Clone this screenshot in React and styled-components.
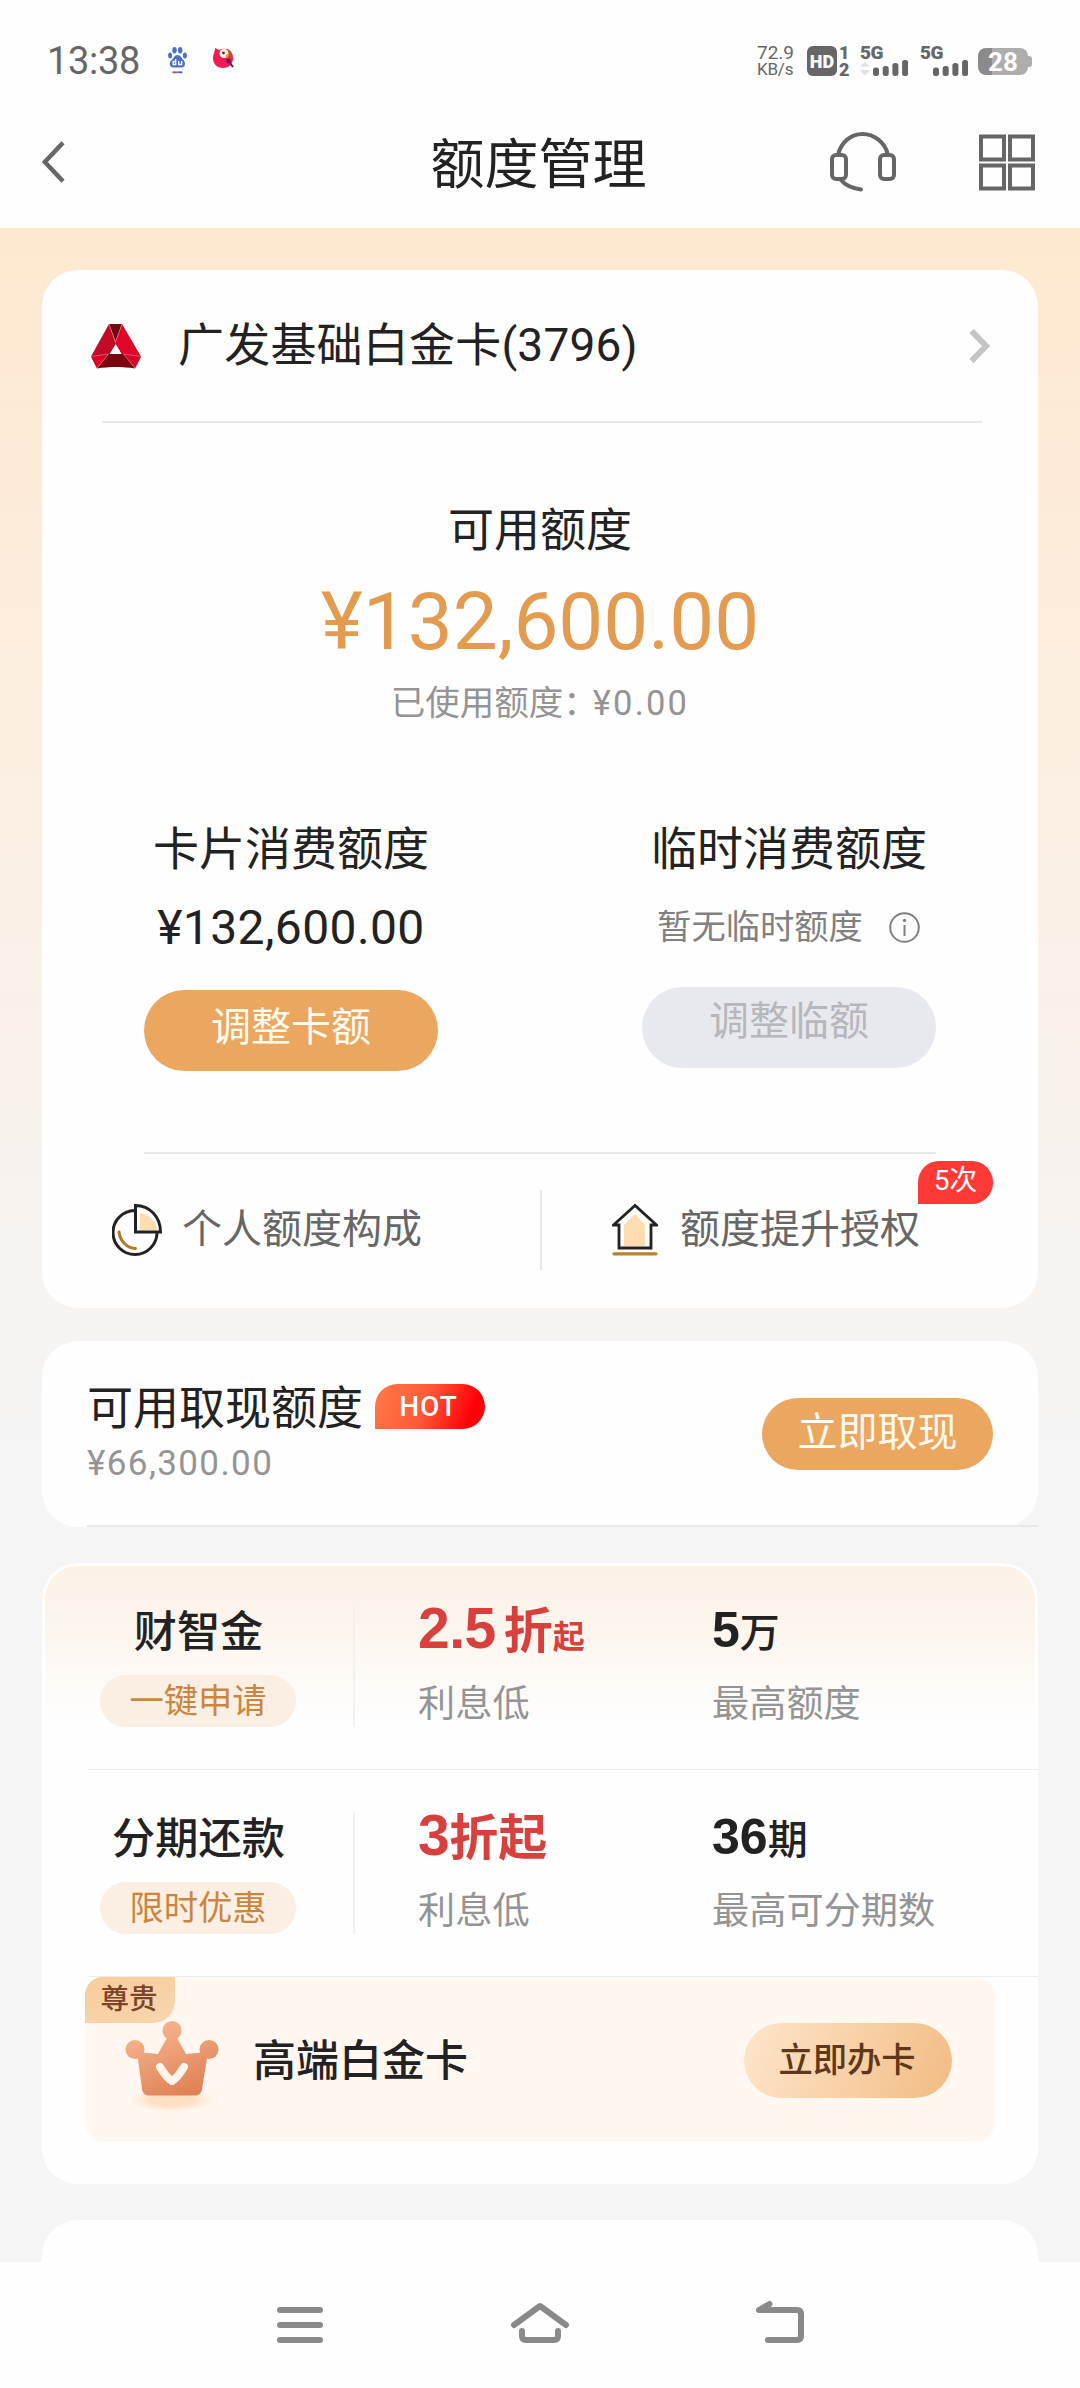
import React from 'react';
import styled, { createGlobalStyle, css } from 'styled-components';

const GlobalStyle = createGlobalStyle`
    * {
        box-sizing: border-box;
    }

    body {
        margin: 0;
        background: #f5f5f5;
        color: #222;
        font-family: Roboto, 'Noto Sans CJK SC', sans-serif;
    }

    svg {
        display: block;
        flex: none;
    }
`;

const Page = styled.div`
    display: flex;
    flex-direction: column;
    width: 1080px;
    height: 2388px;
    overflow: hidden;
`;

/* status bar */

const StatusBar = styled.div`
    display: flex;
    align-items: center;
    flex: none;
    height: 98px;
    padding: 24px 52px 0 47px;
    background: #fefefe;
    color: #666;
`;

const Clock = styled.span`
    width: 121px;
    font-size: 38px;
    line-height: 40px;
    letter-spacing: -0.3px;
`;

const AppIcons = styled.div`
    display: flex;
    flex: 1;
    gap: 26px;
`;

const Speed = styled.div`
    width: 50px;
    font-size: 19px;
    line-height: 17px;
    text-align: left;

    small {
        display: block;
        font-size: 17px;
        letter-spacing: -0.2px;
    }
`;

const HdBadge = styled.span`
    width: 30px;
    height: 30px;
    border-radius: 6px;
    background: #666;
    color: #fff;
    font-size: 18px;
    font-weight: 900;
    line-height: 31px;
    text-align: center;
`;

const SimNumbers = styled.div`
    width: 23px;
    padding-left: 2px;
    font-size: 18px;
    font-weight: 900;
    line-height: 17px;

    span {
        display: block;
        text-align: left;
    }
`;

const Signal = styled.div`
    position: relative;
    width: 48px;
    height: 30px;
    margin-right: ${props => props.$gap}px;

    span {
        position: absolute;
        top: -2px;
        left: 0;
        font-size: 19px;
        font-weight: 900;
        line-height: 18px;
        letter-spacing: -0.5px;
    }
`;

const Battery = styled.div`
    position: relative;
    width: 50px;
    height: 27px;
    border-radius: 8px;
    background: linear-gradient(90deg, #8a8a8a 14px, #adadad 14px);
    color: #fff;
    font-size: 26px;
    font-weight: 700;
    line-height: 28px;
    text-align: center;

    &::after {
        content: '';
        position: absolute;
        top: 8px;
        right: -4px;
        width: 4px;
        height: 11px;
        border-radius: 0 3px 3px 0;
        background: #adadad;
    }
`;

/* header */

const Header = styled.header`
    display: grid;
    grid-template-columns: 1fr auto 1fr;
    align-items: center;
    flex: none;
    height: 130px;
    padding: 0 45px 2px 42px;
    background: #fefefe;
`;

const Title = styled.h1`
    margin: 0;
    padding-top: 8px;
    font-size: 54px;
    font-weight: 400;
    line-height: 72px;
`;

const HeaderActions = styled.div`
    display: flex;
    align-items: center;
    justify-content: flex-end;
    gap: 83px;
`;

/* content */

const Content = styled.main`
    display: flex;
    flex: 1;
    flex-direction: column;
    min-height: 0;
    padding: 42px 42px 0;
    overflow: hidden;
    background: linear-gradient(#fee8cf, #fceee0 480px, #f7f3f0 1000px, #f5f5f5 1240px);
`;

const Card = styled.section`
    position: relative;
    flex: none;
    border-radius: 36px;
    background: #fefefe;
`;

const LimitCard = styled(Card)`
    height: 1038px;
`;

const CardPicker = styled.div`
    display: flex;
    align-items: center;
    height: 151px;
    padding: 1px 47px 0 49px;
    font-size: 46px;

    span {
        flex: 1;
        margin: -2px 0 0 37px;
        line-height: 60px;
        letter-spacing: 0.2px;
    }
`;

const Divider = styled.div`
    height: 2px;
    margin: ${props => props.$margin};
    background: #e7e7e8;
`;

const Summary = styled.div`
    padding-top: 77px;
    text-align: center;
`;

const Label = styled.div`
    font-size: 46px;
    line-height: 60px;
`;

const Total = styled.div`
    margin-top: 17px;
    color: #e39b50;
    font-size: 80px;
    line-height: 90px;
`;

const Used = styled.div`
    margin-top: 11px;
    color: #949494;
    font-size: 34.5px;
    line-height: 50px;

    span {
        margin-left: -5px;
        letter-spacing: 2.2px;
    }
`;

const Limits = styled.div`
    display: grid;
    grid-template-columns: 1fr 1fr;
    height: 252px;
    margin-top: 91px;
`;

const Limit = styled.div`
    display: flex;
    align-items: center;
    flex-direction: column;
`;

const LimitAmount = styled.div`
    margin: 19px 0 32px;
    font-size: 48px;
    line-height: 60px;
    letter-spacing: 0.4px;
`;

const LimitStatus = styled.div`
    display: flex;
    align-items: center;
    gap: 26px;
    margin: 18px 0 30px;
    padding-right: 1px;
    color: #808080;
    font-size: 34.3px;
    line-height: 60px;
`;

const Button = styled.button`
    width: 294px;
    height: 81px;
    padding: 0 0 5px;
    border: 0;
    border-radius: 41px;
    background: #eba65f;
    color: #fffaf0;
    font-family: inherit;
    font-size: 40px;
    line-height: 60px;

    ${props =>
        props.disabled &&
        css`
            padding-bottom: 11px;
            background: #e8e9ee;
            color: #b7b7bb;
        `}
`;

const Links = styled.div`
    display: grid;
    grid-template-columns: 498px 1fr;
    align-items: center;
    height: 151px;
`;

const Link = styled.div`
    position: relative;
    display: flex;
    align-items: center;
    height: 80px;
    gap: ${props => props.$gap}px;
    padding-left: 70px;
    color: #666;
    font-size: 40px;
    line-height: 60px;

    & + & {
        border-left: 2px solid #e7e7e8;
    }
`;

const CountBadge = styled.span`
    position: absolute;
    top: -29px;
    right: 45px;
    width: 75px;
    height: 43px;
    border-radius: 21px 21px 21px 0;
    background: #fe3a36;
    color: #fff;
    font-size: 28px;
    line-height: 39px;
    text-align: center;
`;

const CashCard = styled(Card)`
    display: flex;
    align-items: center;
    justify-content: space-between;
    height: 186px;
    margin-top: 33px;
    padding: 0 45px;

    &::after {
        content: '';
        position: absolute;
        right: 0;
        bottom: 0;
        left: 45px;
        height: 2px;
        background: #e9e9ea;
    }
`;

const CashTitle = styled.div`
    display: flex;
    align-items: center;
    gap: 12px;
    margin-top: -4px;
    font-size: 46px;
    line-height: 56px;
`;

const HotBadge = styled.span`
    width: 110px;
    height: 45px;
    margin-top: -3px;
    border-radius: 23px 23px 23px 0;
    background: linear-gradient(110deg, #ff7a48, #ff5a38 45%, #ff0008 85%);
    color: #fff;
    font-size: 28px;
    font-weight: 500;
    line-height: 46px;
    text-align: center;
    text-indent: -3px;
    letter-spacing: 1px;
`;

const CashAmount = styled.div`
    margin-top: 8px;
    color: #949494;
    font-size: 35px;
    line-height: 40px;
    letter-spacing: 1.4px;
`;

const CashButton = styled(Button)`
    width: 231px;
    height: 72px;
    padding-bottom: 3px;
`;

/* offers */

const OfferCard = styled(Card)`
    height: 621px;
    margin-top: 36px;
    background: linear-gradient(#fbf1e6, #fcf5ed 60px, #fefefe 160px);
    box-shadow: inset 0 0 0 3px #fefefe;
`;

const Offer = styled.div`
    display: grid;
    grid-template-columns: 222px 46px 63px 294px 1fr;
    height: 207px;
    margin-left: 45px;
    padding-top: 42px;
    border-bottom: 1px solid #ededee;

    &::before {
        content: '';
        grid-column: 2;
        grid-row: 1;
        justify-self: end;
        width: 2px;
        height: 122px;
        background: #f3f1f0;
    }
`;

const OfferCell = styled.div`
    grid-column: ${props => props.$column};
    grid-row: 1;
`;

const OfferName = styled.div`
    padding-left: 1px;
    font-size: 43.2px;
    font-weight: 500;
    line-height: 56px;
    text-align: center;
`;

const Tag = styled.div`
    width: 196px;
    height: 52px;
    margin: 14px auto 0;
    border-radius: 26px;
    background: #fbeee3;
    color: #ca8640;
    font-size: 34.3px;
    line-height: 53px;
    text-align: center;
`;

const Rate = styled.div`
    height: 56px;
    color: #d7403c;
    font-family: 'Liberation Sans', 'Noto Sans CJK SC', sans-serif;
    font-size: 49px;
    font-weight: 700;
    line-height: 52px;

    b {
        margin-right: ${props => props.$gap || 0}px;
        font-size: 57px;
        line-height: 1px;
        letter-spacing: -0.5px;
    }

    small {
        font-size: 32px;
    }
`;

const Cap = styled.div`
    height: 56px;
    font-family: 'Liberation Sans', 'Noto Sans CJK SC', sans-serif;
    font-size: 40px;
    font-weight: 500;
    line-height: 57px;

    b {
        font-size: 50px;
        line-height: 1px;
    }
`;

const Hint = styled.div`
    margin-top: 18px;
    color: #949494;
    font-size: 37.2px;
    line-height: 50px;
`;

const Banner = styled.div`
    position: relative;
    display: flex;
    align-items: center;
    height: 165px;
    margin: 0 43px;
    padding: 0 43px 0 38px;
    border-radius: 20px;
    background: #fff7f0;
`;

const BannerTag = styled.span`
    position: absolute;
    top: 0;
    left: 0;
    width: 90px;
    height: 46px;
    padding-right: 2px;
    border-radius: 18px 0 22px 0;
    background: linear-gradient(160deg, #f7cd9b, #f8d5ae);
    color: #7b4429;
    font-size: 28.5px;
    font-weight: 500;
    line-height: 45px;
    text-align: center;
`;

const BannerTitle = styled.div`
    flex: 1;
    margin-left: 30px;
    padding-top: 3px;
    font-size: 43px;
    font-weight: 500;
    line-height: 60px;
`;

const BannerButton = styled(Button)`
    width: 208px;
    height: 75px;
    margin-top: 1px;
    padding: 0 2px 0 0;
    background: linear-gradient(110deg, #fee5cb, #f8cfa4 55%, #f1bb83);
    color: #5f381b;
    font-size: 34.3px;
    font-weight: 500;
`;

const NextCard = styled(Card)`
    height: 60px;
    margin-top: 36px;
    border-radius: 36px 36px 0 0;
`;

const NavBar = styled.nav`
    display: grid;
    grid-template-columns: repeat(3, 240px);
    align-items: center;
    justify-content: center;
    justify-items: center;
    flex: none;
    height: 126px;
    background: #fefefe;
`;

/* icons */

const PawIcon = () => (
    <svg width="19" height="28" viewBox="0 0 19 28" fill="#4a70c8">
        <ellipse cx="6.5" cy="3.3" rx="2.2" ry="3.2" />
        <ellipse cx="12.2" cy="3.3" rx="2.2" ry="3.2" />
        <ellipse cx="2.1" cy="8.4" rx="2" ry="3" />
        <ellipse cx="16.9" cy="8.4" rx="2" ry="3" />
        <path d="M9.5 8c3 0 4 3 6 5s2.4 7-1.5 7.500h-9C1 20 1 15 3.500 13s3-5 6-5Z" />
        <path
            d="M7.700 12v5.500H5.200v-3h2.500M10.700 14v3.500h3V14"
            fill="none"
            stroke="#fff"
            strokeWidth="1.300"
        />
        <path d="M4.500 25.300h5" stroke="#b84a70" strokeWidth="1.800" />
        <path d="M9.500 25.300h5" stroke="#5a5ac8" strokeWidth="1.800" />
    </svg>
);

const BirdIcon = () => (
    <svg width="22" height="28" viewBox="0 0 22 28">
        <path d="M2 1l4 2c6-3 14 0 14 8 0 6-4 10-10 10S0 17 0 11c0-4 2-6 2-10Z" fill="#ee1c55" />
        <path d="M14 2c5 2 6 6 5 10l-4-2Z" fill="#c84a2c" />
        <circle cx="11" cy="6.500" r="4.500" fill="#fff4e8" />
        <circle cx="10.500" cy="6" r="1.400" fill="#7a2030" />
        <path d="M12 9l4-3-1 5Z" fill="#d9a040" />
        <circle cx="15.500" cy="14" r="2.300" fill="#7a1050" />
        <path d="M17 16l3 4" stroke="#5a1040" strokeWidth="2" />
    </svg>
);

const SignalBars = ({ arrows, offset }) => (
    <svg width="48" height="30" viewBox="0 0 48 30" fill="#666">
        {arrows && <path d="M0 20.500L5 16l5 4.500ZM0 24h10l-5 5.500Z" fill="#e0e0e0" />}
        {[8.5, 10, 13, 16].map((height, i) => (
            <rect
                key={height}
                x={offset + i * 9.7}
                y={30 - height}
                width="6"
                height={height}
                rx="2.500"
            />
        ))}
    </svg>
);

const BackIcon = () => (
    <svg width="24" height="42" viewBox="0 0 24 42" fill="none" stroke="#666" strokeWidth="4.500">
        <path d="M21 1.800L2.800 21 21 40.200" />
    </svg>
);

const HeadsetIcon = () => (
    <svg width="66" height="60" viewBox="0 0 66 60" fill="none" stroke="#666" strokeWidth="4">
        <path d="M8 23C11 10 21 2 32.500 2S55 10 58 23" />
        <rect x="2" y="23" width="14" height="24" rx="4" />
        <rect x="50" y="23" width="14" height="24" rx="4" />
        <path d="M11 48c4 5 10 8 20 9.500" strokeLinecap="round" />
    </svg>
);

const GridIcon = () => (
    <svg width="56" height="57" viewBox="0 0 56 57" fill="none" stroke="#666" strokeWidth="4">
        <path d="M2 2.500h23v23H2ZM31 2.500h23v23H31ZM2 31.500h23v23H2ZM31 31.500h23v23H31Z" />
    </svg>
);

const BankLogo = () => (
    <svg width="50" height="45" viewBox="0 0 50 45">
        <path d="M18 0L0 32.500 6 44l13-14.500 6-9.500Z" fill="#c30a26" />
        <path d="M31 0l19 32.500L44 44 30 29.500l-6-10Z" fill="#e0062a" />
        <path d="M18 0h13l-6.500 18Z" fill="#6d0710" />
        <path d="M17.500 30h15L44 44.500c-12-2-26-2-38 0Z" fill="#7a0710" />
        <path d="M0 32.500L17.500 30 6 44.500ZM50 32.500L32.500 30 44 44.500Z" fill="#d8042a" />
        <path d="M24.700 20l5.800 10H19Z" fill="#fff" />
        <path
            d="M18 0l6.500 18L31 0M0 32.500L17.500 30 6 44M50 32.500L32.500 30 44 44"
            fill="none"
            stroke="#f4a0a8"
            strokeWidth="0.500"
        />
    </svg>
);

const ChevronIcon = () => (
    <svg width="22" height="34" viewBox="0 0 22 34" fill="none" stroke="#c4c4c6" strokeWidth="6">
        <path d="M2.500 2l14.500 15L2.500 32" />
    </svg>
);

const InfoIcon = () => (
    <svg width="31" height="31" viewBox="0 0 31 31" fill="none" stroke="#808080" strokeWidth="2">
        <circle cx="15.500" cy="15.500" r="14.300" />
        <path d="M15.500 13v11" />
        <circle cx="15.500" cy="8.500" r="1.700" fill="#808080" stroke="none" />
    </svg>
);

const PieIcon = () => (
    <svg width="51" height="52" viewBox="0 0 51 52" fill="none" strokeWidth="3">
        <path d="M22.500 6.500A22 22 0 1 0 45 28.500" stroke="#222" />
        <path d="M28 9c8 1 15 7 17 16v1.500H28Z" fill="#fddcb0" />
        <path d="M23.500 1.500c14 0 25 11 25 26.500h-25Z" stroke="#222" />
        <path d="M7 28c1 9 8 16 16.500 16.500" stroke="#b07a22" strokeLinecap="round" />
    </svg>
);

const HouseIcon = () => (
    <svg width="46" height="53" viewBox="0 0 46 53" fill="none">
        <path d="M12 22l11-11 10 11v21H12Z" fill="#fddcb0" />
        <path d="M23 2.500L1.500 22H7v23h32V22h5.500Z" stroke="#222" strokeWidth="2.800" />
        <path d="M2 50.800h42" stroke="#b9812f" strokeWidth="3.200" strokeLinecap="round" />
    </svg>
);

const CrownSvg = styled.svg`
    margin-top: 12px;
`;

const CrownIcon = () => (
    <CrownSvg width="100" height="96" viewBox="0 0 100 96">
        <defs>
            <linearGradient id="crown" gradientUnits="userSpaceOnUse" x1="35" y1="5" x2="65" y2="78">
                <stop offset="0" stopColor="#f6b48e" />
                <stop offset="1" stopColor="#df8053" />
            </linearGradient>
            <radialGradient id="crownShadow">
                <stop offset="0.500" stopColor="#fde0c4" />
                <stop offset="1" stopColor="#fde0c4" stopOpacity="0" />
            </radialGradient>
        </defs>
        <ellipse cx="49" cy="82" rx="42" ry="12" fill="url(#crownShadow)" />
        <g fill="url(#crown)">
            <path d="M45 18h8l10 18 22-2-6 37c-.5 4-3 6.500-7 6.500H26c-4 0-6.500-2.500-7-6.500l-5-37 21 2Z" />
            <circle cx="49" cy="12.500" r="9.500" />
            <circle cx="12" cy="31.500" r="9.500" />
            <circle cx="86" cy="31.500" r="9.500" />
        </g>
        <path
            d="M37 49c3 5 7 11 12 14 5-3 9-9 12-14"
            fill="none"
            stroke="#fff5ec"
            strokeWidth="8"
            strokeLinecap="round"
            strokeLinejoin="round"
        />
    </CrownSvg>
);

const MenuIcon = () => (
    <svg width="46" height="44" viewBox="0 0 46 44" stroke="#898989" strokeWidth="6">
        <path d="M3 7h40M3 22h40M3 37h40" strokeLinecap="round" />
    </svg>
);

const HomeIcon = () => (
    <svg width="58" height="50" viewBox="0 0 58 50" fill="none" stroke="#898989" strokeWidth="6">
        <g strokeLinecap="round" strokeLinejoin="round">
            <path d="M3 25L29 6l26 19" />
            <path d="M11 31v5q0 4 4 4h28q4 0 4-4v-5" />
        </g>
    </svg>
);

const ReturnIcon = () => (
    <svg width="48" height="50" viewBox="0 0 48 50" fill="none" stroke="#898989" strokeWidth="6">
        <g strokeLinecap="round" strokeLinejoin="round">
            <path d="M13.500 4L3 10h38q4 0 4 4v22q0 4-4 4H12" />
            <path d="M14 5v4H7Z" fill="#898989" strokeWidth="2" />
        </g>
    </svg>
);

const App = () => (
    <Page>
        <GlobalStyle />
        <StatusBar>
            <Clock>13:38</Clock>
            <AppIcons>
                <PawIcon />
                <BirdIcon />
            </AppIcons>
            <Speed>
                72.9
                <small>KB/s</small>
            </Speed>
            <HdBadge>HD</HdBadge>
            <SimNumbers>
                <span>1</span>
                <span>2</span>
            </SimNumbers>
            <Signal $gap={12}>
                <span>5G</span>
                <SignalBars arrows offset={13} />
            </Signal>
            <Signal $gap={10}>
                <span>5G</span>
                <SignalBars offset={13} />
            </Signal>
            <Battery>28</Battery>
        </StatusBar>
        <Header>
            <BackIcon />
            <Title>额度管理</Title>
            <HeaderActions>
                <HeadsetIcon />
                <GridIcon />
            </HeaderActions>
        </Header>

        <Content>
            <LimitCard>
                <CardPicker>
                    <BankLogo />
                    <span>广发基础白金卡(3796)</span>
                    <ChevronIcon />
                </CardPicker>
                <Divider $margin="0 56px 0 60px" />
                <Summary>
                    <Label>可用额度</Label>
                    <Total>¥132,600.00</Total>
                    <Used>
                        已使用额度：<span>¥0.00</span>
                    </Used>
                </Summary>
                <Limits>
                    <Limit>
                        <Label>卡片消费额度</Label>
                        <LimitAmount>¥132,600.00</LimitAmount>
                        <Button>调整卡额</Button>
                    </Limit>
                    <Limit>
                        <Label>临时消费额度</Label>
                        <LimitStatus>
                            暂无临时额度
                            <InfoIcon />
                        </LimitStatus>
                        <Button disabled>调整临额</Button>
                    </Limit>
                </Limits>
                <Divider $margin="81px 102px 0" />
                <Links>
                    <Link $gap={19}>
                        <PieIcon />
                        个人额度构成
                    </Link>
                    <Link $gap={22}>
                        <HouseIcon />
                        额度提升授权
                        <CountBadge>5次</CountBadge>
                    </Link>
                </Links>
            </LimitCard>

            <CashCard>
                <div>
                    <CashTitle>
                        可用取现额度
                        <HotBadge>HOT</HotBadge>
                    </CashTitle>
                    <CashAmount>¥66,300.00</CashAmount>
                </div>
                <CashButton>立即取现</CashButton>
            </CashCard>

            <OfferCard>
                <Offer>
                    <OfferCell $column={1}>
                        <OfferName>财智金</OfferName>
                        <Tag>一键申请</Tag>
                    </OfferCell>
                    <OfferCell $column={4}>
                        <Rate $gap={8}>
                            <b>2.5</b>折<small>起</small>
                        </Rate>
                        <Hint>利息低</Hint>
                    </OfferCell>
                    <OfferCell $column={5}>
                        <Cap>
                            <b>5</b>万
                        </Cap>
                        <Hint>最高额度</Hint>
                    </OfferCell>
                </Offer>
                <Offer>
                    <OfferCell $column={1}>
                        <OfferName>分期还款</OfferName>
                        <Tag>限时优惠</Tag>
                    </OfferCell>
                    <OfferCell $column={4}>
                        <Rate>
                            <b>3</b>折起
                        </Rate>
                        <Hint>利息低</Hint>
                    </OfferCell>
                    <OfferCell $column={5}>
                        <Cap>
                            <b>36</b>期
                        </Cap>
                        <Hint>最高可分期数</Hint>
                    </OfferCell>
                </Offer>
                <Banner>
                    <BannerTag>尊贵</BannerTag>
                    <CrownIcon />
                    <BannerTitle>高端白金卡</BannerTitle>
                    <BannerButton>立即办卡</BannerButton>
                </Banner>
            </OfferCard>

            <NextCard />
        </Content>

        <NavBar>
            <MenuIcon />
            <HomeIcon />
            <ReturnIcon />
        </NavBar>
    </Page>
);

export default App;
